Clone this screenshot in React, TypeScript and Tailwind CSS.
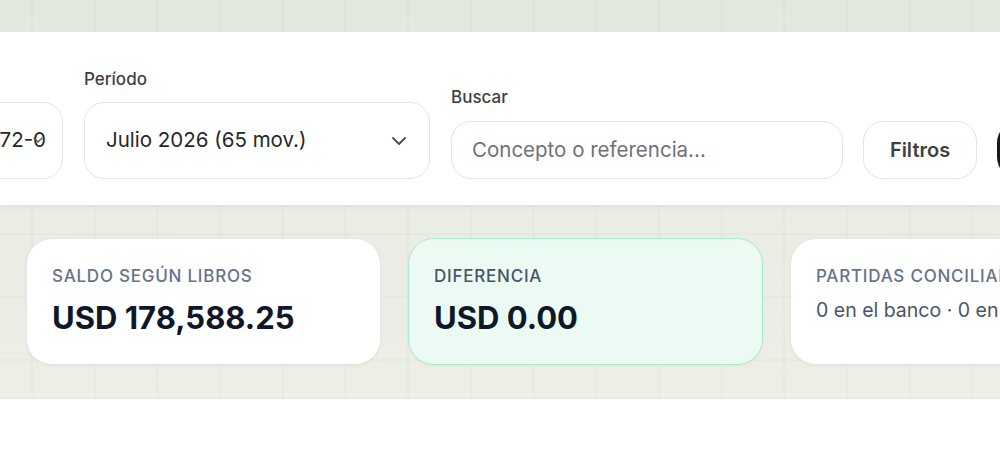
import React from "react";

function Chevron({ className, size = 18 }: { className?: string; size?: number }) {
  return (
    <svg className={className} width={size} height={size} viewBox="0 0 24 24" fill="none" stroke="currentColor" strokeWidth="2" strokeLinecap="round" strokeLinejoin="round">
      <path d="m6 9 6 6 6-6" />
    </svg>
  );
}

export default function App() {
  const font = { fontFamily: "Inter, 'Noto Sans', sans-serif" };
  return (
    <div className="w-[1000px] h-[460px] overflow-hidden bg-white" style={font}>
      <div className="relative h-[399px] border-b border-[#e3e5e0] bg-[linear-gradient(180deg,#e3e8dd_0%,#eaede3_50%,#edefe6_100%)]">
        <div className="absolute inset-0 bg-[linear-gradient(to_right,rgba(120,130,110,0.045)_2px,transparent_2px),linear-gradient(to_bottom,rgba(120,130,110,0.045)_2px,transparent_2px)] bg-[size:62.7px_63px] bg-[position:31px_44px]" />
        <div className="relative">
          <div className="h-[32px]" />
          <div className="h-[173px] bg-white shadow-[0_2px_6px_rgba(0,0,0,0.05)] flex items-end pb-[26px]">
            <div className="-ml-[127px] relative w-[190px] h-[77px] shrink-0 rounded-[20px] border border-[#e4e4e7] bg-white flex items-center justify-end pr-[16px] overflow-hidden">
              <span className="whitespace-nowrap text-[20.5px] text-[#27272a]">Banco 0472-0</span>
              <Chevron size={16} className="absolute left-[156px] top-[29px] text-[#52525b]" />
            </div>
            <div className="ml-[21px] flex flex-col gap-[13px]">
              <span className="text-[17px] font-medium text-[#3f3f46] leading-[20px]">Período</span>
              <div className="w-[346px] h-[77px] rounded-[20px] border border-[#e4e4e7] bg-white flex items-center justify-between pl-[21px] pr-[18px]">
                <span className="text-[20.5px] text-[#27272a]">Julio 2026 (65 mov.)</span>
                <Chevron size={24} className="text-[#52525b]" />
              </div>
            </div>
            <div className="ml-[21px] flex flex-col gap-[14px]">
              <span className="text-[17px] font-medium text-[#3f3f46] leading-[20px]">Buscar</span>
              <div className="w-[392px] h-[58px] rounded-[20px] border border-[#e4e4e7] bg-white flex items-center pl-[20px]">
                <span className="text-[20.5px] text-[#71717a]">Concepto o referencia...</span>
              </div>
            </div>
            <button className="ml-[20px] w-[114px] h-[58px] rounded-[20px] border border-[#e4e4e7] bg-white text-[20px] font-semibold text-[#3f3f46] shrink-0">
              Filtros
            </button>
            <div className="ml-[20px] w-[140px] h-[58px] shrink-0 rounded-[22px] bg-[#18181b]" />
          </div>
          <div className="flex gap-[27px] pt-[33px] pl-[26px]">
            <div className="w-[355px] h-[127px] shrink-0 rounded-[26px] border border-[#e7e8e4] bg-white shadow-[0_1px_3px_rgba(0,0,0,0.05)] px-[25px] pt-[26px]">
              <div className="text-[17px] font-medium tracking-[0.045em] text-[#64748b] leading-[22px] whitespace-nowrap">SALDO SEGÚN LIBROS</div>
              <div className="mt-[12px] text-[31px] font-bold text-[#0f172a] leading-[38px] whitespace-nowrap">USD 178,588.25</div>
            </div>
            <div className="w-[355px] h-[127px] shrink-0 rounded-[26px] border border-[#a7ecc9] bg-[#ebfbf3] shadow-[0_1px_3px_rgba(0,0,0,0.05)] px-[25px] pt-[26px]">
              <div className="text-[17px] font-medium tracking-[0.045em] text-[#475569] leading-[22px] whitespace-nowrap">DIFERENCIA</div>
              <div className="mt-[12px] text-[31px] font-bold text-[#0f172a] leading-[38px] whitespace-nowrap">USD 0.00</div>
            </div>
            <div className="w-[355px] h-[127px] shrink-0 rounded-[26px] border border-[#e7e8e4] bg-white shadow-[0_1px_3px_rgba(0,0,0,0.05)] px-[25px] pt-[26px]">
              <div className="text-[17px] font-medium tracking-[0.045em] text-[#64748b] leading-[22px] whitespace-nowrap">PARTIDAS CONCILIADAS</div>
              <div className="mt-[9px] text-[19.5px] text-[#475569] leading-[28px] whitespace-nowrap">0 en el banco · 0 en libros</div>
            </div>
          </div>
        </div>
      </div>
    </div>
  );
}
